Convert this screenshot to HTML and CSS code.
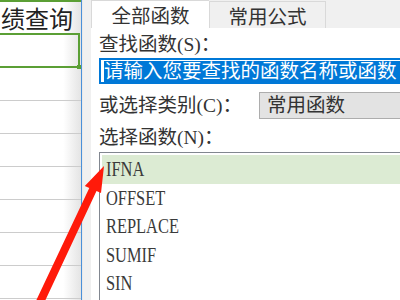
FILE: index.html
```html
<!DOCTYPE html>
<html lang="zh-CN">
<head>
  <meta charset="UTF-8" />
  <title>插入函数</title>
  <link rel="stylesheet" href="styles.css">
</head>
<body>

  <div class="screen">
    <!-- sheet behind the dialog -->
    <div class="sheet">
      <div class="row head">绩查询</div>
      <div class="row sel"></div>
      <div class="row"></div>
      <div class="row"></div>
      <div class="row"></div>
      <div class="row"></div>
      <div class="row"></div>
      <div class="row"></div>
      <div class="row"></div>
    </div>
    <div class="edge"></div>

    <!-- insert function dialog -->
    <div class="dialog">
      <div class="tabs">
        <div class="tab active">全部函数</div>
        <div class="tab">常用公式</div>
      </div>
      <div class="panel">
        <div class="label first">查找函数(S)：</div>
        <div class="search"><span class="picked">请输入您要查找的函数名称或函数</span></div>

        <div class="category">
          <div class="label">或选择类别(C)：</div>
          <div class="select">常用函数</div>
        </div>

        <div class="label">选择函数(N)：</div>
        <div class="list">
          <div class="item on"><span>IFNA</span></div>
          <div class="item"><span>OFFSET</span></div>
          <div class="item"><span>REPLACE</span></div>
          <div class="item"><span>SUMIF</span></div>
          <div class="item"><span>SIN</span></div>
        </div>
      </div>
    </div>
  </div>

  <!-- red pointer arrow drawn over everything -->
  <svg class="arrow" width="400" height="300" viewBox="0 0 400 300">
    <polygon fill="#ff1a0a" points="104,166 101,193 96.5,191 43.6,304 36.4,300 89.3,188 84.8,186"/>
  </svg>

</body>
</html>
```

FILE: styles.css
```css
* {margin: 0;padding: 0;box-sizing: border-box;}

body {
  width: 400px;
  height: 300px;
  overflow: hidden;
  background: #f0f0f0;
  font-family: "Liberation Serif", "Noto Sans CJK SC", serif;
  color: #333;
  position: relative;
}

.screen {
  display: flex;
  height: 300px;
}

/* Spreadsheet part */
.sheet {
  width: 81px;
  flex: none;
  background: linear-gradient(to right, #ffffff 78%, #e4e4e4 100%);
  border-top: 2px solid #5b9f35;
}

.row {
  height: 33px;
  border-bottom: 1px solid #cccccc;
}

.head {
  height: 31px;
  display: flex;
  justify-content: flex-end;
  align-items: center;
  padding-right: 8px;
  font-family: "Noto Sans CJK SC", sans-serif;
  font-size: 24px;
  line-height: 1;
  color: #222;
  white-space: nowrap;
  border-bottom: none;
}

.sel {
  height: 35px;
  border: 2px solid #5b9f35;
  border-left: none;
  margin-right: 1px;
  position: relative;
}

.sel::after {
  content: "";
  position: absolute;
  right: -3px;
  bottom: -3px;
  width: 4px;
  height: 4px;
  background: #5b9f35;
}

.edge {
  width: 2px;
  flex: none;
  border-left: 1px solid #4a90d9;
  background: #e9e9e9;
  margin-right: 8px;
}

/* Dialog */
.dialog {
  flex: 1;
  display: flex;
  flex-direction: column;
  font-size: 19.5px;
}

.tabs {
  height: 31px;
  display: flex;
  align-items: flex-end;
}

.tab {
  width: 117px;
  height: 27px;
  display: flex;
  align-items: center;
  justify-content: center;
  font-family: "Noto Sans CJK SC", sans-serif;
  border: 1px solid #d9d9d9;
  border-bottom: none;
  background: #f0f0f0;
  color: #333;
}

.tab.active {
  width: 118px;
  height: 28px;
  background: #fff;
  border-right: none;
}

.panel {
  flex: 1;
  background: #fff;
  padding-left: 8px;
}

.label {
  height: 22px;
  line-height: 22px;
  margin-top: 8px;
  white-space: nowrap;
}

.label.first {
  margin-top: 6px;
}

.search {
  margin-top: 2px;
  height: 26px;
  border: 2px solid #0078d7;
  border-right: none;
  padding: 1px 0 0 3px;
  overflow: hidden;
}

.picked {
  display: block;
  height: 21px;
  line-height: 21px;
  background: #0078d7;
  color: #fff;
  white-space: nowrap;
  overflow: hidden;
}

.category {
  margin-top: 8px;
  display: grid;
  grid-template-columns: 160px 1fr;
  align-items: center;
}

.category .label {
  margin-top: 0;
}

.select {
  height: 27px;
  line-height: 25px;
  background: #e3e3e3;
  border: 1px solid #adadad;
  border-right: none;
  padding-left: 7px;
  color: #333;
}

.list {
  margin-top: 3px;
  height: 160px;
  border: 1px solid #828790;
  border-right: none;
  padding: 2px 0 0 2px;
}

.item {
  height: 28.5px;
  line-height: 28px;
  padding-left: 4px;
  font-size: 20px;
  color: #3a3a3a;
}

.item span {
  display: inline-block;
  transform: scaleX(0.82);
  transform-origin: left center;
}

.item.on {
  background: #dcebd3;
}

.arrow {
  position: absolute;
  left: 0;
  top: 0;
}
```
